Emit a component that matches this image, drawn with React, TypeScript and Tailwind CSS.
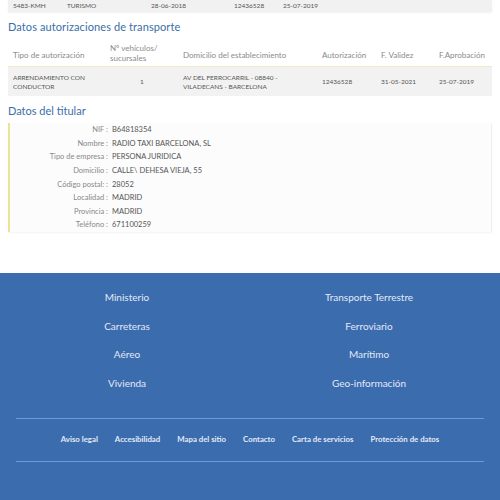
import React from "react";

const font = { fontFamily: "Lato, 'Noto Sans', sans-serif" };

const titular: [string, string][] = [
  ["NIF", "B64818354"],
  ["Nombre", "RADIO TAXI BARCELONA, SL"],
  ["Tipo de empresa", "PERSONA JURIDICA"],
  ["Domicilio", "CALLE\\ DEHESA VIEJA, 55"],
  ["Código postal:", "28052"],
  ["Localidad", "MADRID"],
  ["Provincia", "MADRID"],
  ["Teléfono", "671100259"],
];

const links: [string, string][] = [
  ["Ministerio", "Transporte Terrestre"],
  ["Carreteras", "Ferroviario"],
  ["Aéreo", "Marítimo"],
  ["Vivienda", "Geo-información"],
];

const bottom = ["Aviso legal", "Accesibilidad", "Mapa del sitio", "Contacto", "Carta de servicios", "Protección de datos"];

export default function App() {
  return (
    <div className="w-[500px] h-[500px] overflow-hidden bg-white flex flex-col" style={font}>
      {/* top partial row */}
      <div className="mx-[8px] h-[12px] shrink-0 bg-[#f1f1f1] shadow-[0_1px_2px_rgba(0,0,0,0.06)] flex items-center text-[6.5px] text-[#555] uppercase">
        <span className="ml-[5px] w-[54px]">5483-KMH</span>
        <span className="w-[84px]">TURISMO</span>
        <span className="w-[83px]">28-06-2018</span>
        <span className="w-[49px]">12436528</span>
        <span>25-07-2019</span>
      </div>

      <h2 className="mt-[8px] ml-[8px] text-[11px] leading-[14px] text-[#3a6ea8] tracking-[0.1px]">Datos autorizaciones de transporte</h2>

      <div className="mx-[8px] mt-[6px]">
        <div className="h-[27px] flex items-center text-[8px] leading-[10px] text-[#8a8a8a] border-b border-[#f1ebc0]">
          <span className="ml-[5px] w-[97px] mt-[3px]">Tipo de autorización</span>
          <span className="w-[73px]">Nº vehículos/<br />sucursales</span>
          <span className="w-[139px] mt-[3px]">Domicilio del establecimiento</span>
          <span className="w-[59px] mt-[3px]">Autorización</span>
          <span className="w-[58px] mt-[3px]">F. Validez</span>
          <span className="mt-[3px]">F.Aprobación</span>
        </div>
        <div className="h-[29px] bg-[#f2f2f2] flex items-center text-[6.5px] leading-[9px] text-[#555] uppercase">
          <span className="ml-[5px] w-[97px]">ARRENDAMIENTO CON<br />CONDUCTOR</span>
          <span className="w-[73px] pl-[30px]">1</span>
          <span className="w-[139px]">AV DEL FERROCARRIL - 08840 -<br />VILADECANS - BARCELONA</span>
          <span className="w-[59px]">12436528</span>
          <span className="w-[58px]">31-05-2021</span>
          <span>25-07-2019</span>
        </div>
      </div>

      <h2 className="mt-[8px] ml-[8px] text-[11px] leading-[14px] text-[#3a6ea8]">Datos del titular</h2>

      <div className="mx-[8px] mt-[5px] h-[109px] shrink-0 bg-[#fcfcfc] border-l-[2px] border-[#ece39a] border-r border-r-[#f0f0f0] shadow-[0_1px_2px_rgba(0,0,0,0.05)] flex flex-col">
        {titular.map(([k, v]) => (
          <div key={k} className="h-[13.6px] flex items-center text-[7.5px] text-[#555]">
            <span className="w-[98px] text-right text-[#888]">{k + " :"}</span>
            <span className="ml-[4px]">{v}</span>
          </div>
        ))}
      </div>

      <div className="mt-[41px] flex-1 bg-[#3b6cae] flex flex-col text-[#e2eaf6]">
        <div className="pt-[19px] flex flex-col gap-[17.5px]">
          {links.map(([a, b]) => (
            <div key={a} className="flex text-[10px] leading-[11px]">
              <span className="w-[254px] text-center">{a}</span>
              <span className="w-[230px] text-center">{b}</span>
            </div>
          ))}
        </div>
        <div className="mt-[29px] mx-[16px] border-t border-[#6e98d6] border-b h-[44px] flex items-center justify-center gap-[17px] text-[7.8px] font-bold">
          {bottom.map((b) => (
            <span key={b}>{b}</span>
          ))}
        </div>
      </div>
    </div>
  );
}
